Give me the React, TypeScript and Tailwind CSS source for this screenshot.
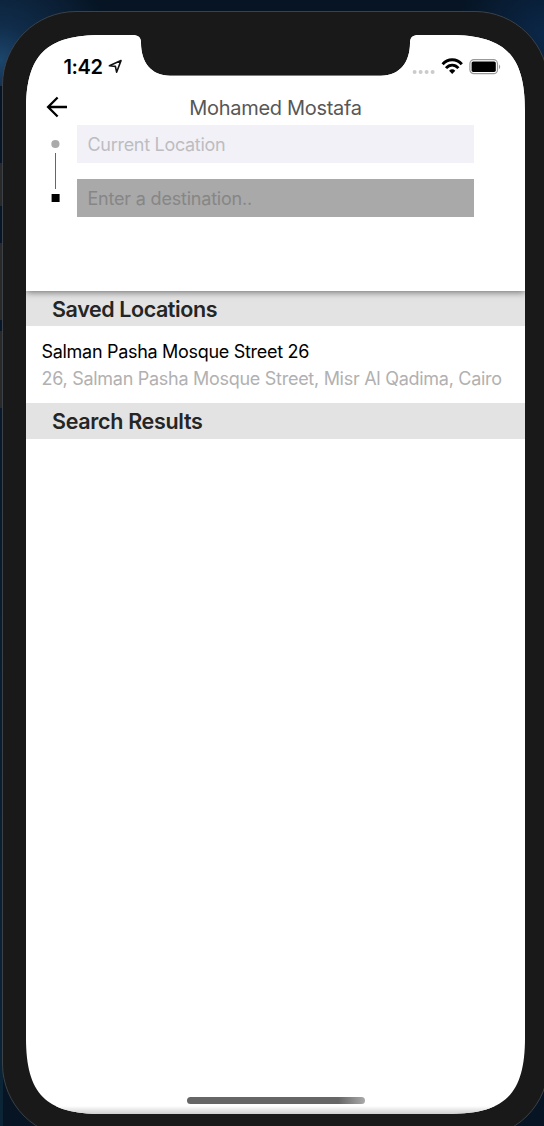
import type { ReactNode } from "react";

function SectionHeader({ children, raised = false }: { children: ReactNode; raised?: boolean }) {
  return (
    <h2
      className={
        "flex shrink-0 items-center bg-[#e3e3e3] pl-[26px] pt-[2px] text-[21.5px] font-semibold leading-none text-[#252525] " +
        (raised ? "h-[35px] tracking-[-0.42px]" : "h-[36px] tracking-[-0.32px]")
      }
    >
      {children}
    </h2>
  );
}

function StatusBar() {
  return (
    <div className="relative z-20 flex h-[54px] shrink-0 items-start justify-between bg-white pl-[37.5px] pr-[24px]">
      <div className="flex items-start gap-[5px] pt-[20px]">
        <span className="text-[20px] font-semibold leading-[24px] tracking-[-0.4px]">1:42</span>
        <svg width="15" height="15" viewBox="0 0 15 15" fill="none" stroke="#111" strokeWidth="1.6" strokeLinejoin="round" className="mt-[4px]">
          <path d="M13 1.6 1.4 6.8 7.4 7.4 8.6 13.2Z" />
        </svg>
      </div>
      <div className="flex items-center pt-[22px]">
        <svg width="23" height="18" viewBox="0 0 23 18" fill="#cbcbcb" className="mr-[6px]">
          <circle cx="2.6" cy="14.9" r="2" />
          <circle cx="8.6" cy="14.9" r="2" />
          <circle cx="14.6" cy="14.9" r="2" />
          <circle cx="20.6" cy="14.9" r="2" />
        </svg>
        <svg width="22" height="18" viewBox="0 0 22 18" fill="none" stroke="#000" strokeWidth="2.9" className="mr-[6px]">
          <path d="M1.6 7.3C6.8 1.3 15.6 1.3 20.8 7.3" />
          <path d="M5 11.1C8.6 7.1 13.8 7.1 17.4 11.1" />
          <path d="M11.2 16.9 8.1 13.8Q11.2 10.9 14.3 13.8Z" fill="#000" stroke="none" />
        </svg>
        <svg width="32" height="18" viewBox="0 0 32 18">
          <rect x="0.9" y="2.7" width="27.6" height="14" rx="4" fill="#fff" stroke="#999" strokeWidth="1.2" />
          <rect x="2.6" y="4.5" width="24.2" height="10.4" rx="1.6" />
          <path d="M30 7.4v4.6c1.6-.8 1.6-3.8 0-4.6Z" fill="#999" />
        </svg>
      </div>
    </div>
  );
}

function RouteHeader() {
  return (
    <header className="relative z-10 h-[202px] shrink-0 bg-white shadow-[0_1px_7px_rgba(0,0,0,0.55)]">
      <div className="grid h-[36px] grid-cols-[62px_1fr_62px] items-center">
        <svg width="22" height="22" viewBox="0 0 22 22" fill="none" stroke="#000" strokeWidth="2.3" className="ml-[20px]">
          <path d="M21 11H2.2M11.6 1.5 2.1 11l9.5 9.5" />
        </svg>
        <h1 className="pt-px text-center text-[20px] leading-none tracking-[-0.3px] text-[#575757]">Mohamed Mostafa</h1>
      </div>
      <div className="flex">
        <svg width="51" height="92" viewBox="0 0 51 92" className="shrink-0">
          <circle cx="29.4" cy="19" r="4.1" fill="#aaa" />
          <rect x="29" y="28" width="1" height="36" fill="#666" />
          <rect x="25.6" y="69" width="8" height="8" />
        </svg>
        <div className="flex w-[397px] flex-col gap-[16px] text-[18px]">
          <div className="flex h-[38px] items-center bg-[#f2f1f7] pl-[10.5px] tracking-[-0.3px] text-[#bdbdc1]">
            <span>Current Location</span>
          </div>
          <div className="flex h-[38px] items-center bg-[#a9a9a9] pl-[10.5px] tracking-[-0.2px] text-[#868686]">
            <span>Enter a destination..</span>
          </div>
        </div>
      </div>
    </header>
  );
}

export default function App() {
  return (
    <div className="relative h-[1126px] w-[544px] overflow-hidden bg-[#061423] bg-[radial-gradient(circle_at_0px_60px,#1c466c_0px,#102c4a_35px,transparent_115px),radial-gradient(circle_at_544px_35px,#0b2748_0px,transparent_90px)] font-['Inter','Liberation_Sans',sans-serif]">
      <div className="absolute left-0 top-[86px] h-[1040px] w-[3px] bg-linear-to-b from-[#061426] to-[#0b2536]" />
      <div className="absolute left-0 top-[163px] h-[43px] w-[3px] bg-[#292929]" />
      <div className="absolute left-0 top-[243px] h-[77px] w-[3px] bg-[#292929]" />
      <div className="absolute left-0 top-[331px] h-[77px] w-[3px] bg-[#292929]" />
      <div className="relative ml-[2px] mt-[11px] h-[1127px] w-[547px] overflow-hidden rounded-[74px] border border-[#3b4147] bg-[#191919] pl-[23px] pt-[23px]">
        <div className="flex h-[1079px] w-[499px] flex-col bg-white [clip-path:path('M0_76C0_20_20_0_76_0H106C112_0_115_2_115_8C115_27_125_40.7_144_40.7H355C374_40.7_384_27_384_8C384_2_387_0_393_0H423C479_0_499_20_499_76V1003C499_1059_479_1079_423_1079H76C20_1079_0_1059_0_1003Z')]">
          <StatusBar />
          <RouteHeader />
          <SectionHeader raised>Saved Locations</SectionHeader>
          <div className="flex h-[77px] shrink-0 flex-col pl-[15.5px] pt-[12px]">
            <p className="whitespace-nowrap text-[18px] leading-[27px] tracking-[-0.3px] text-black">Salman Pasha Mosque Street 26</p>
            <p className="whitespace-nowrap text-[18px] leading-[27px] tracking-[-0.28px] text-[#b1b1b1]">
              26, Salman Pasha Mosque Street, Misr Al Qadima, Cairo
            </p>
          </div>
          <SectionHeader>Search Results</SectionHeader>
          <div className="flex flex-1 items-end justify-center">
            <div className="mb-[10px] h-[7px] w-[178px] rounded-full bg-linear-to-r from-[#666] from-85% to-[#aaa]" />
          </div>
          <div className="-mt-[8px] h-[8px] shrink-0 bg-linear-to-b from-white to-[#cfcfcf]" />
        </div>
      </div>
    </div>
  );
}
